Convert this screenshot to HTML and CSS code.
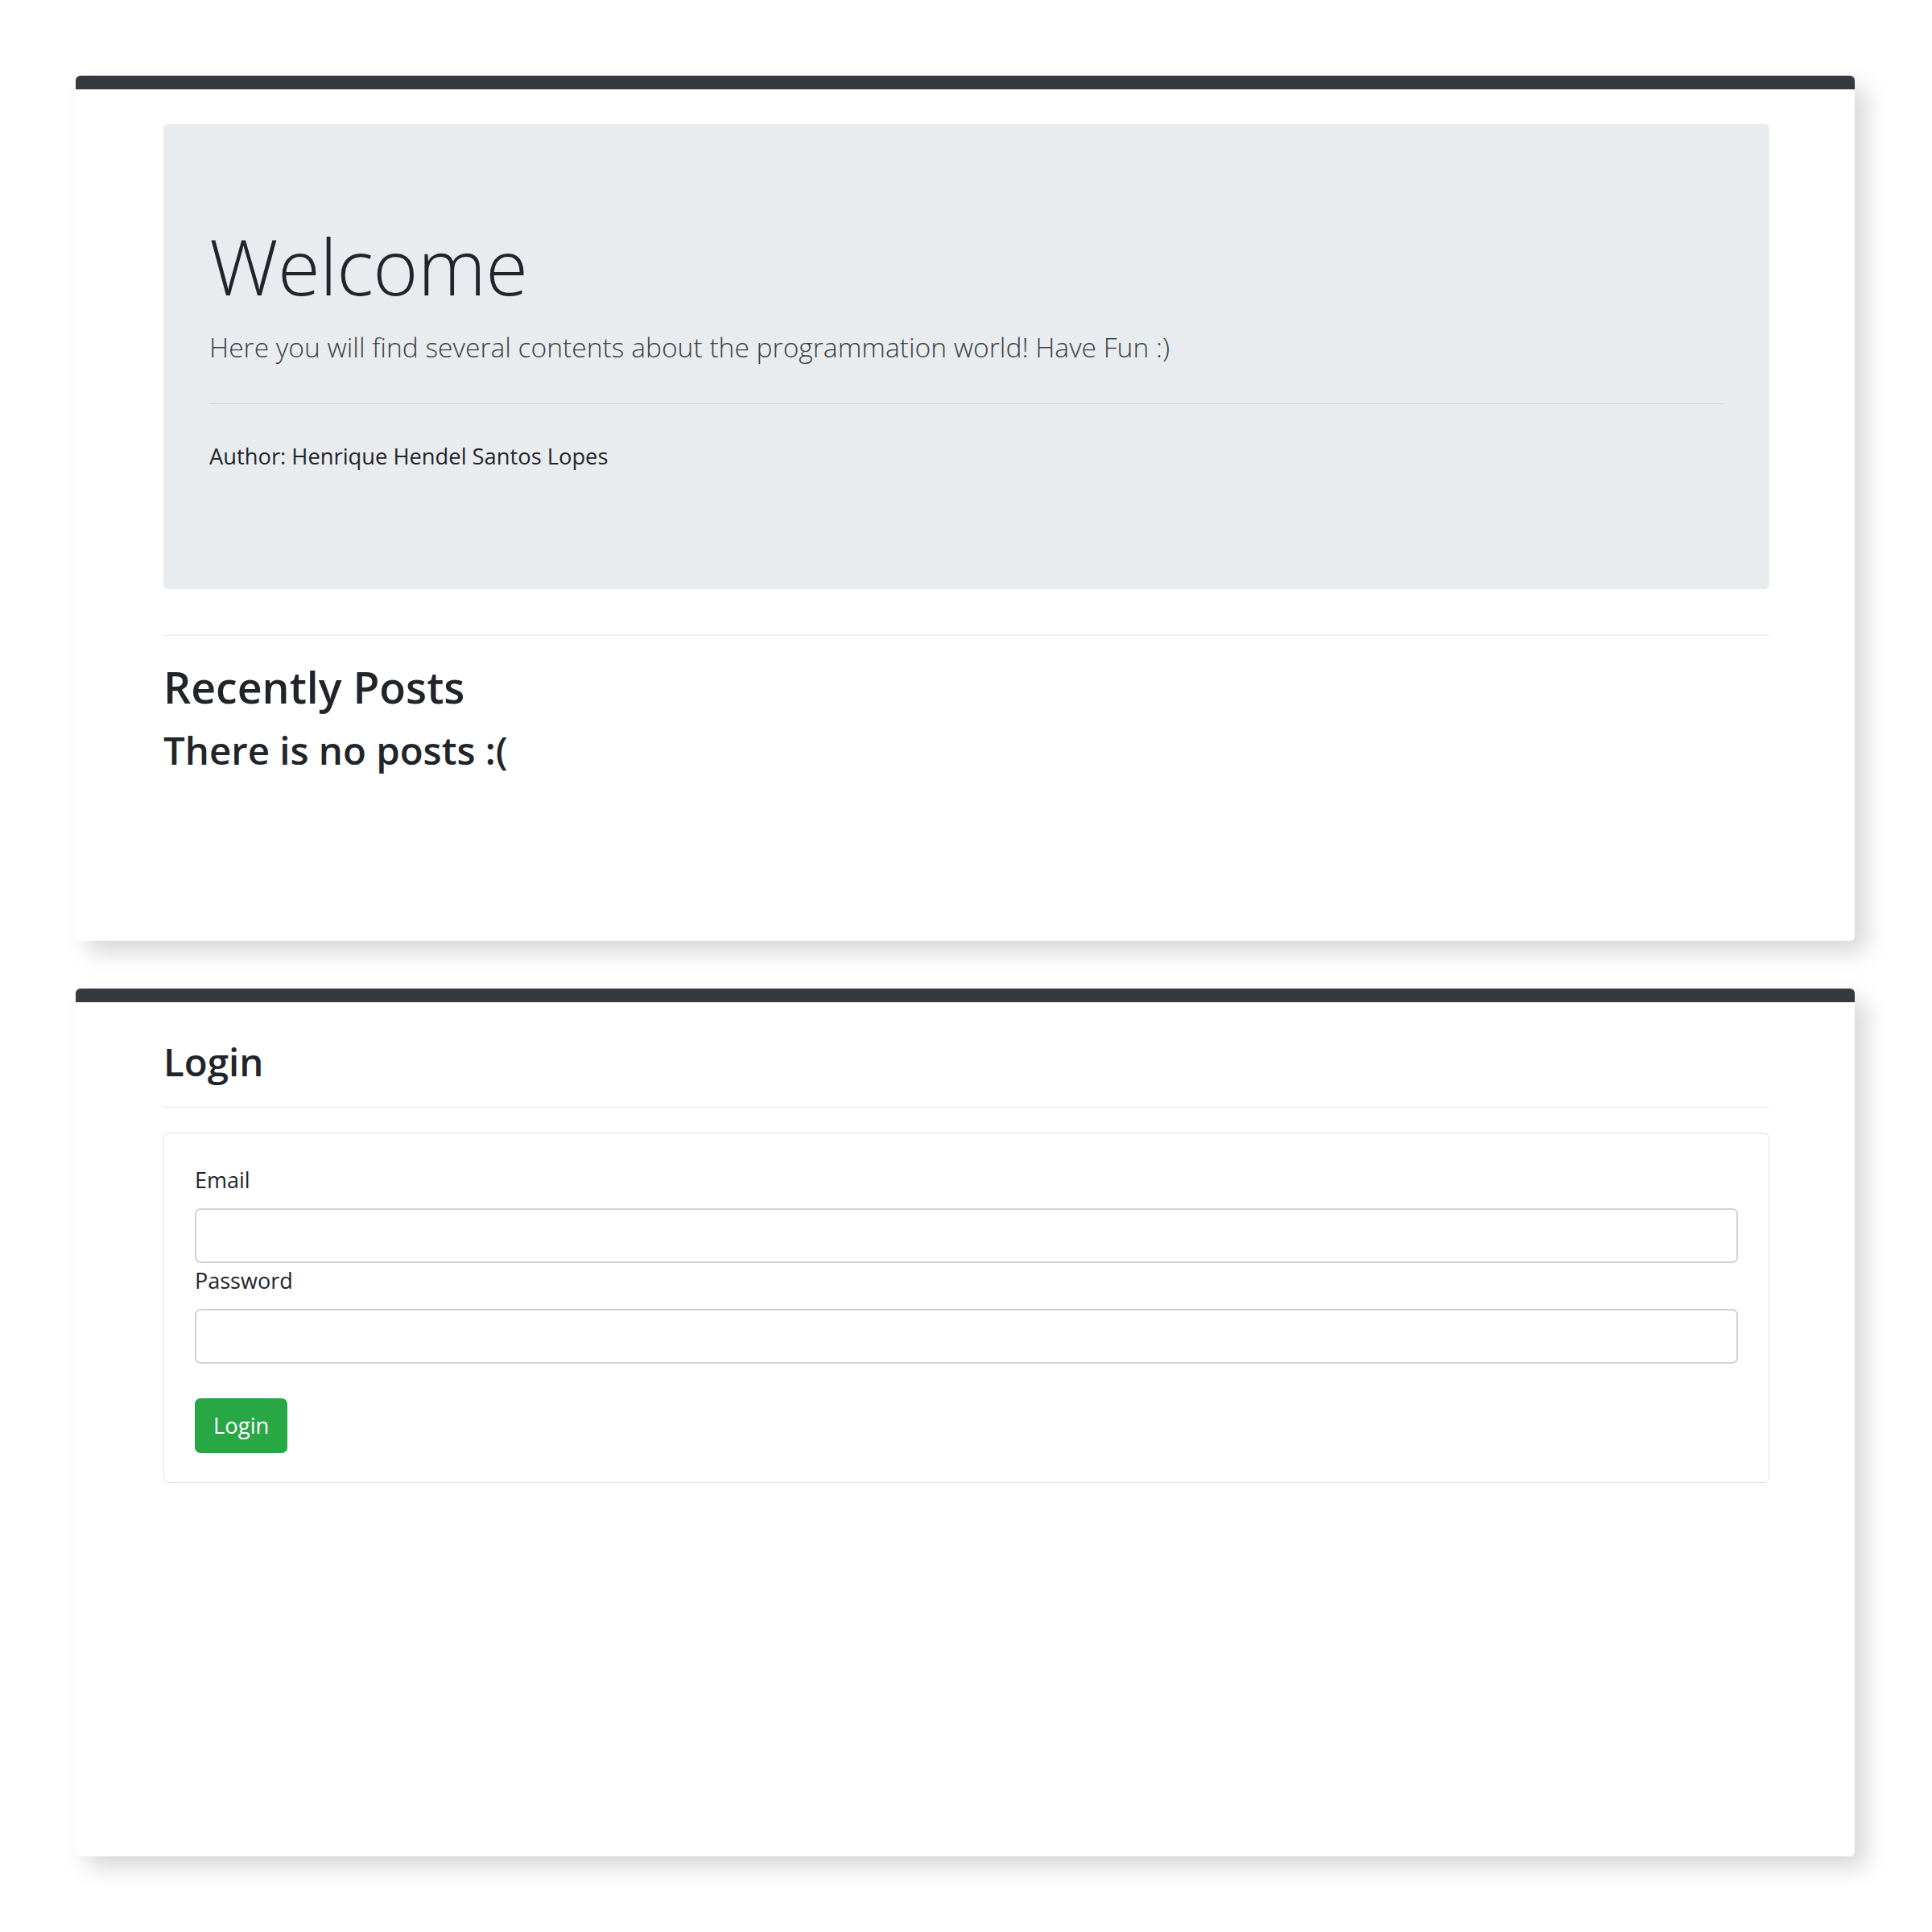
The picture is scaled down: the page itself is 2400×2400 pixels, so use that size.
FILE: index.html
```html
<!DOCTYPE html>
<html lang="en">
<head>
<meta charset="utf-8">
<title>Welcome</title>
<link rel="stylesheet" href="styles.css">
</head>
<body>
<div class="page">
  <section class="card">
    <div class="jumbotron">
      <h1 class="display">Welcome</h1>
      <p class="lead">Here you will find several contents about the programmation world! Have Fun :)</p>
      <hr class="jumbo-rule">
      <p class="author">Author: Henrique Hendel Santos Lopes</p>
    </div>
    <hr class="rule rule-posts">
    <h2 class="title">Recently Posts</h2>
    <h3 class="subtitle">There is no posts :(</h3>
  </section>
  <section class="card card-login">
    <h3 class="subtitle">Login</h3>
    <hr class="rule rule-login">
    <form class="form-card">
      <label class="label" for="email">Email</label>
      <input class="input" id="email" type="email">
      <label class="label" for="password">Password</label>
      <input class="input" id="password" type="password">
      <button class="btn" type="button">Login</button>
    </form>
  </section>
</div>
</body>
</html>
```

FILE: styles.css
```css
* { box-sizing: border-box; }

html, body {
  margin: 0;
  padding: 0;
  background: #ffffff;
}

body {
  font-family: "Open Sans", "Noto Sans", sans-serif;
  color: #212529;
  font-size: 27.4px;
}

.page {
  padding: 94px 96px 60px 94px;
  display: flex;
  flex-direction: column;
  gap: 59px;
}

.card {
  display: flex;
  flex-direction: column;
  align-items: stretch;
  min-height: 1075px;
  background: #ffffff;
  border-top: 17px solid #343a40;
  border-radius: 6px;
  padding: 43px 106px 0 109px;
  box-shadow: 14px 14px 28px rgba(0, 0, 0, 0.16);
}

.card-login {
  padding-top: 44px;
  min-height: 1078px;
}

.jumbotron {
  display: flex;
  flex-direction: column;
  background: #e9ecef;
  border-radius: 6px;
  padding: 115px 57px;
}

.display {
  margin: 0 0 14px;
  font-size: 96px;
  font-weight: 300;
  line-height: 121px;
  letter-spacing: -0.6px;
  color: #212529;
}

.lead {
  margin: 0;
  font-size: 33.6px;
  font-weight: 300;
  line-height: 54px;
  color: #3a3f44;
}

.jumbo-rule {
  margin: 43px 0;
  border: 0;
  border-top: 1px solid rgba(0, 0, 0, 0.1);
  height: 0;
}

.author {
  margin: 0 0 29px;
  font-size: 27.3px;
  line-height: 43px;
}

.rule {
  border: 0;
  border-top: 1px solid rgba(0, 0, 0, 0.1);
  height: 0;
  width: 100%;
}

.rule-posts {
  margin: 57px 0 29px;
}

.rule-login {
  margin: 26px 0 31px;
}

.title {
  margin: 0 0 14px;
  font-size: 53.6px;
  font-weight: 600;
  line-height: 69px;
}

.subtitle {
  margin: 0;
  font-size: 47.4px;
  font-weight: 600;
  line-height: 60px;
}

.form-card {
  display: flex;
  flex-direction: column;
  align-items: stretch;
  border: 1px solid rgba(0, 0, 0, 0.125);
  border-radius: 7px;
  padding: 36px 38px;
}

.label {
  font-size: 27px;
  line-height: 43px;
  margin-bottom: 14px;
}

.input {
  height: 68px;
  border: 2px solid #ced4da;
  border-radius: 7px;
  background: #ffffff;
  font-family: inherit;
  font-size: 27.4px;
  padding: 0 22px;
  margin: 0;
}

.btn {
  align-self: flex-start;
  margin-top: 43px;
  height: 68px;
  padding: 0 23px;
  border: 0;
  border-radius: 7px;
  background: #28a745;
  color: #ffffff;
  font-family: inherit;
  font-size: 27.4px;
  line-height: 68px;
}
```
